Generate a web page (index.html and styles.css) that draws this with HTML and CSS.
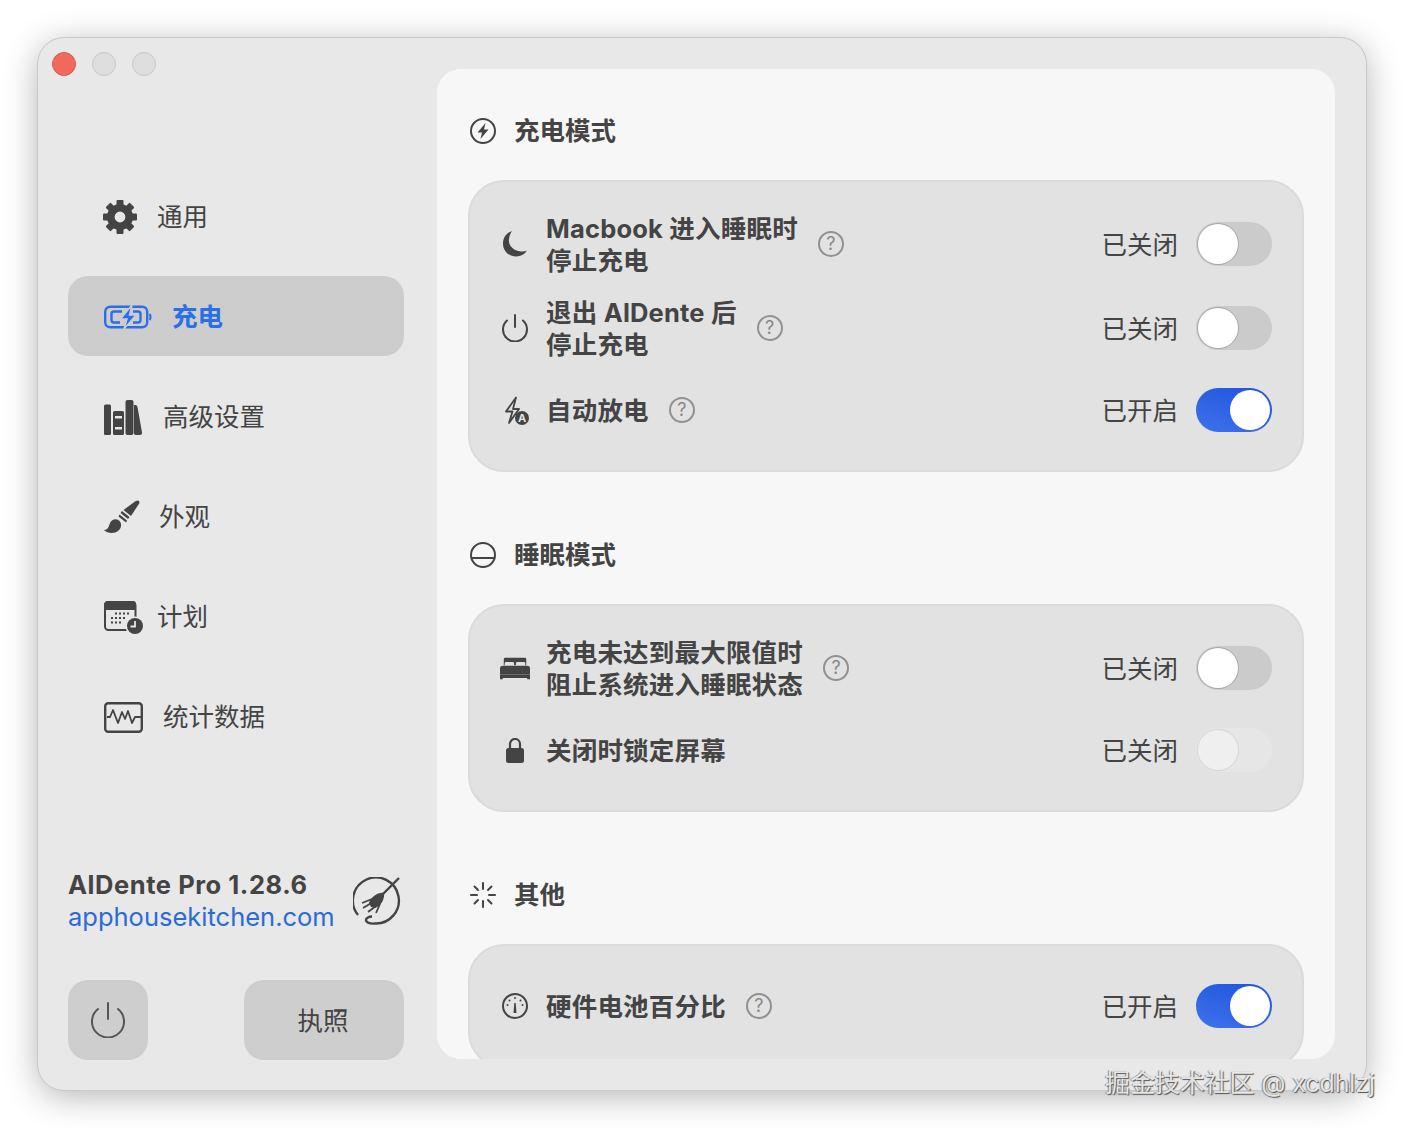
FILE: index.html
```html
<!DOCTYPE html>
<html lang="zh">
<head>
<meta charset="utf-8">
<title>AlDente</title>
<link rel="stylesheet" href="styles.css">
</head>
<body>
<div class="window">
  <aside class="sidebar">
    <div class="lights"><i class="light red"></i><i class="light"></i><i class="light"></i></div>
    <nav class="nav">
      <a class="nav-item">
        <svg width="34" height="34" viewBox="0 0 34 34" class="nudge"><circle cx="17" cy="17" r="9.2" fill="none" stroke="#444" stroke-width="7.6"/><g fill="#444"><rect x="13.5" y="0" width="7" height="6" rx="1"/><rect x="13.5" y="0" width="7" height="6" rx="1" transform="rotate(45 17 17)"/><rect x="13.5" y="0" width="7" height="6" rx="1" transform="rotate(90 17 17)"/><rect x="13.5" y="0" width="7" height="6" rx="1" transform="rotate(135 17 17)"/><rect x="13.5" y="0" width="7" height="6" rx="1" transform="rotate(180 17 17)"/><rect x="13.5" y="0" width="7" height="6" rx="1" transform="rotate(225 17 17)"/><rect x="13.5" y="0" width="7" height="6" rx="1" transform="rotate(270 17 17)"/><rect x="13.5" y="0" width="7" height="6" rx="1" transform="rotate(315 17 17)"/></g></svg>
        <span>通用</span>
      </a>
      <a class="nav-item active">
        <svg width="48" height="24" viewBox="0 0 48 24" fill="none" stroke="#2b6fe8" stroke-width="2.400"><rect x="1.200" y="1.700" width="42" height="20.600" rx="5"/><path d="M45.500 9c1.300 1 1.300 5 0 6" stroke-width="2.200"/><path d="M18 6.500H10a2.500 2.500 0 0 0-2.500 2.500v6a2.500 2.500 0 0 0 2.500 2.500h6M29 17.500h5a2.500 2.500 0 0 0 2.500-2.500V9A2.500 2.500 0 0 0 34 6.500h-5" stroke-width="2.400"/><path d="M28 0 16.500 14h6.500L20 24 32 10h-6.500z" fill="#2b6fe8" stroke="#cdcdcd" stroke-width="1.500"/></svg>
        <span>充电</span>
      </a>
      <a class="nav-item wide">
        <svg width="38" height="35" viewBox="0 0 38 35" fill="#444"><rect x="0" y="4.500" width="7" height="30.500" rx="1.500"/><path d="M10.500 11h8a1.500 1.500 0 0 1 1.500 1.500V33.500a1.500 1.500 0 0 1-1.500 1.500h-8A1.500 1.500 0 0 1 9 33.500V12.500A1.500 1.500 0 0 1 10.500 11zM11 16v2.500h7V16zM11 27v2.500h7V27z" fill-rule="evenodd"/><rect x="21.500" y="0" width="8" height="35" rx="2"/><path d="M30 5h1.500q1.500 0 2 2L38 32.500q.3 2.500-2 2.500h-4.500q-1.500 0-1.500-2z"/></svg>
        <span>高级设置</span>
      </a>
      <a class="nav-item narrow">
        <svg width="36" height="34" viewBox="0 0 36 34" fill="#444"><path d="M31 1.500q4.500-2.500 4.500 1.500L27 16l-7.500-6z"/><path d="M18 11l7.500 6-1.500 2-7.500-6zM15.500 14.500 23 20.500l-1 2-7.500-6z"/><path d="M0 30c4 0 4.500-3 6-7 1.500-3.500 6-5 9-2.500 3 2.500 3 7.500-1 10.500-3.500 3-11 2.500-14-1z"/></svg>
        <span>外观</span>
      </a>
      <a class="nav-item tight">
        <svg width="39" height="33" viewBox="0 0 39 33" fill="none"><rect x="1" y="1" width="30.500" height="28" rx="3.500" stroke="#444" stroke-width="2"/><path d="M4 0h25a3 3 0 0 1 3 3v6H0V4a4 4 0 0 1 4-4z" fill="#444"/><g fill="#444"><rect x="11" y="11.500" width="2" height="2"/><rect x="15" y="11.500" width="2" height="2"/><rect x="19" y="11.500" width="2" height="2"/><rect x="23" y="11.500" width="2" height="2"/><rect x="7" y="16" width="2" height="2"/><rect x="11" y="16" width="2" height="2"/><rect x="15" y="16" width="2" height="2"/><rect x="19" y="16" width="2" height="2"/><rect x="7" y="20.500" width="2" height="2"/><rect x="11" y="20.500" width="2" height="2"/><rect x="15" y="20.500" width="2" height="2"/></g><circle cx="31" cy="25" r="9.500" fill="#e8e8e8"/><circle cx="31" cy="25" r="8" fill="#444"/><path d="M31 20v5.500h-4.500" stroke="#e8e8e8" stroke-width="1.800"/></svg>
        <span>计划</span>
      </a>
      <a class="nav-item">
        <svg width="39" height="31" viewBox="0 0 39 31" fill="none" stroke="#444"><rect x="1.200" y="1.200" width="36.600" height="28.600" rx="3" stroke-width="2.400"/><path d="M3 15h3l3-7 5 13 4-11 3 7 3-8 4 12 3-6h6" stroke-width="1.800" stroke-linejoin="round"/></svg>
        <span>统计数据</span>
      </a>
    </nav>
    <div class="brand">
      <div class="brand-text">
        <strong>AlDente Pro 1.28.6</strong>
        <a class="link">apphousekitchen.com</a>
      </div>
      <svg width="48" height="48" viewBox="0 0 48 48" fill="none" stroke="#444"><path d="M5 38A23 23 0 1 1 22 46.500c-5 .5-9-1-9-3.500 0-2 3-3.500 6-3.500" stroke-width="2.400"/><path d="M46 1 28 19" stroke-width="2.400"/><path d="M31 16c1 6-3 13-9 15l-4-1-2-4c2-6 9-11 15-10z" fill="#444" stroke="none"/><path d="M19 22 9 26M20 25 10 31M23 29l-8 6M27 27l-4 9" stroke-width="1.800"/></svg>
    </div>
    <div class="actions">
      <button class="btn btn-power"><svg width="34" height="36" viewBox="0 0 34 36" fill="none" stroke="#555" stroke-width="2" stroke-linecap="round"><path d="M7 7A16 16 0 1 0 27 7"/><path d="M17 1v16"/></svg></button>
      <button class="btn btn-license"><span class="btn-text">执照</span></button>
    </div>
  </aside>

  <main class="panel">
    <section class="section">
      <h2 class="section-head">
        <svg width="26" height="26" viewBox="0 0 26 26" fill="none"><circle cx="13" cy="13" r="12" stroke="#444" stroke-width="2"/><path d="M15.500 5 7.500 14.500H12L10.500 21l8-9.500H14z" fill="#444"/></svg>
        <span>充电模式</span>
      </h2>
      <div class="card">
        <div class="row">
          <span class="row-icon"><svg width="24" height="26" viewBox="0 0 24 26" fill="#444"><path d="M9 0C3 2 0 7 0 13c0 7 6 12.500 13 12.500 5 0 9-2.500 11-6-2 1-4 1.300-6 1C10 20 5 14 6 8c.3-3 1.500-6 3-8z"/></svg></span>
          <span class="row-label">Macbook 进入睡眠时<br>停止充电</span>
          <span class="help">?</span>
          <span class="status">已关闭</span>
          <span class="toggle"></span>
        </div>
        <div class="row">
          <span class="row-icon"><svg width="26" height="28" viewBox="0 0 26 28" fill="none" stroke="#444" stroke-width="2" stroke-linecap="round"><path d="M5 6.500A12 12 0 1 0 21 6.500"/><path d="M13 1v12"/></svg></span>
          <span class="row-label">退出 AlDente 后<br>停止充电</span>
          <span class="help">?</span>
          <span class="status">已关闭</span>
          <span class="toggle"></span>
        </div>
        <div class="row">
          <span class="row-icon"><svg width="24" height="29" viewBox="0 0 24 29" fill="none" class="shift"><path d="M11 1.500 1 15.500h6.500L4 27l10-14H8z" stroke="#444" stroke-width="1.800" stroke-linejoin="round"/><circle cx="17" cy="22" r="7" fill="#444"/><text x="17" y="26" text-anchor="middle" class="badge-a">A</text></svg></span>
          <span class="row-label">自动放电</span>
          <span class="help">?</span>
          <span class="status">已开启</span>
          <span class="toggle on"></span>
        </div>
      </div>
    </section>

    <section class="section">
      <h2 class="section-head">
        <svg width="26" height="26" viewBox="0 0 26 26" fill="none" stroke="#444" stroke-width="2"><circle cx="13" cy="13" r="12"/><path d="M1 16h24"/></svg>
        <span>睡眠模式</span>
      </h2>
      <div class="card">
        <div class="row">
          <span class="row-icon"><svg width="32" height="23" viewBox="0 0 32 23" fill="#444"><path d="M4 1.500A1.500 1.500 0 0 1 5.500 0h21A1.500 1.500 0 0 1 28 1.500V8h-1V6q0-1.500-1.500-1.500h-7Q17 4.500 17 6v2h-2V6q0-1.500-1.500-1.500h-7Q5 4.500 5 6v2H4z"/><path d="M3 8.500h26q3 0 3 3V18H0v-6.500q0-3 3-3z"/><path d="M0 18h32v5h-3v-1.500H3V23H0z"/></svg></span>
          <span class="row-label">充电未达到最大限值时<br>阻止系统进入睡眠状态</span>
          <span class="help">?</span>
          <span class="status">已关闭</span>
          <span class="toggle"></span>
        </div>
        <div class="row">
          <span class="row-icon"><svg width="18" height="25" viewBox="0 0 18 25" fill="none"><path d="M4 11V6a5 5 0 0 1 10 0v5" stroke="#444" stroke-width="2.200"/><rect x="0" y="10" width="18" height="15" rx="2.500" fill="#444"/></svg></span>
          <span class="row-label">关闭时锁定屏幕</span>
          <span class="status">已关闭</span>
          <span class="toggle disabled"></span>
        </div>
      </div>
    </section>

    <section class="section">
      <h2 class="section-head">
        <svg width="26" height="26" viewBox="0 0 26 26" fill="none" stroke="#444" stroke-width="2" stroke-linecap="round"><path d="M13 1v6M13 19v6M1 13h6M19 13h6M4.500 4.500l3.500 3.500M21.500 4.500 18 8M4.500 21.500 8 18M21.500 21.500 18 18"/></svg>
        <span>其他</span>
      </h2>
      <div class="card">
        <div class="row">
          <span class="row-icon"><svg width="26" height="26" viewBox="0 0 26 26" fill="none"><circle cx="13" cy="13" r="12" stroke="#444" stroke-width="2"/><path d="M11.500 20 12.300 10h1.400l.8 10z" fill="#444"/><g fill="#444"><circle cx="5.500" cy="12" r="1"/><circle cx="7.500" cy="7.500" r="1"/><circle cx="13" cy="5" r="1"/><circle cx="18.500" cy="7.500" r="1"/><circle cx="20.500" cy="12" r="1"/></g></svg></span>
          <span class="row-label">硬件电池百分比</span>
          <span class="help">?</span>
          <span class="status">已开启</span>
          <span class="toggle on"></span>
        </div>
      </div>
    </section>
  </main>
</div>
<div class="watermark">掘金技术社区 @ xcdhlzj</div>
</body>
</html>
```

FILE: styles.css
```css
* { box-sizing: border-box; }

html, body { margin: 0; padding: 0; }

body {
  width: 1404px;
  height: 1128px;
  position: relative;
  overflow: hidden;
  background: #fff;
  color: #444;
  font-family: Inter, "Noto Sans CJK SC", sans-serif;
  font-size: 25.5px;
  line-height: 32px;
  padding: 38px;
}

.window {
  width: 1328px;
  height: 1052px;
  display: flex;
  background: #e8e8e8;
  border-radius: 26px;
  box-shadow: 0 0 0 1px #c9c9c9, 0 6px 34px rgba(0, 0, 0, .3);
}

.sidebar {
  width: 399px;
  flex: none;
  display: flex;
  flex-direction: column;
  padding: 14px 33px 30px 30px;
}

.lights { display: flex; gap: 16px; margin-left: -16px; }

.light {
  width: 24px;
  height: 24px;
  border-radius: 50%;
  background: #dedede;
  border: 1px solid #c8c8c8;
}

.light.red { background: #ee6a5f; border-color: #dd5a50; }

.nav {
  margin-top: 100px;
  display: flex;
  flex-direction: column;
  gap: 20px;
}

.nav-item {
  height: 80px;
  display: flex;
  align-items: center;
  gap: 20px;
  padding: 2px 0 0 36px;
  border-radius: 20px;
}

.nav-item svg { flex: none; }
.nav-item .nudge { margin-left: -1px; }
.nav-item.wide { gap: 21px; }
.nav-item.narrow { gap: 19px; }
.nav-item.tight { gap: 14px; }
.nav-item.active { background: #cdcdcd; color: #2b6fe8; font-weight: 700; }

.brand {
  margin-top: auto;
  margin-bottom: 47px;
  display: flex;
  align-items: center;
  justify-content: space-between;
  padding-right: 3px;
}

.brand-text { display: flex; flex-direction: column; }
.brand-text strong { font-weight: 700; letter-spacing: .55px; }
.link { color: #2b6bd6; }

.actions { display: flex; justify-content: space-between; }

.btn {
  height: 80px;
  border: 0;
  border-radius: 20px;
  background: #cecece;
  color: #444;
  font: inherit;
  padding: 0;
  display: flex;
  align-items: center;
  justify-content: center;
}

.btn-power { width: 80px; }
.btn-license { width: 160px; }
.btn-text { padding: 2px 2px 0 0; }

.panel {
  width: 898px;
  height: 990px;
  margin-top: 31px;
  flex: none;
  padding: 37px 31px 0;
  background: #f7f7f7;
  border-radius: 24px;
  overflow: hidden;
  display: flex;
  flex-direction: column;
  gap: 58px;
}

.section { flex: none; }

.section-head {
  margin: 0 0 24px;
  height: 50px;
  display: flex;
  align-items: center;
  gap: 18px;
  padding-left: 2px;
  font: inherit;
  font-weight: 700;
}

.card {
  background: #e2e2e2;
  border: 2px solid #dbdbdb;
  border-radius: 36px;
  padding: 30px;
  display: flex;
  flex-direction: column;
  gap: 20px;
}

.row {
  min-height: 60px;
  display: flex;
  align-items: center;
  gap: 20px;
}

.row-icon {
  width: 30px;
  margin-right: -4px;
  flex: none;
  display: flex;
  justify-content: center;
}

.row-icon .shift { margin-left: 4px; }

.row-label {
  font-weight: 700;
  letter-spacing: .2px;
  padding-top: 1px;
  margin-bottom: -1px;
}

.badge-a {
  fill: #e2e2e2;
  font: 700 11px Inter, sans-serif;
}

.help {
  width: 26px;
  height: 26px;
  flex: none;
  border: 2px solid #919191;
  border-radius: 50%;
  color: #888;
  font-size: 18px;
  line-height: 22px;
  text-align: center;
}

.status {
  margin-left: auto;
  margin-right: -2px;
  padding-top: 1px;
  margin-bottom: -1px;
}

.toggle {
  width: 76px;
  height: 44px;
  flex: none;
  border-radius: 22px;
  background: #cbcbcb;
  display: flex;
  align-items: center;
  padding: 2px;
}

.toggle::after {
  content: "";
  width: 40px;
  height: 40px;
  border-radius: 50%;
  background: #fff;
  box-shadow: 0 0 0 1px #a8a8a8;
}

.toggle.on {
  background: linear-gradient(200deg, #1f53dc, #3e72ec);
  justify-content: flex-end;
}

.toggle.on::after { box-shadow: none; }
.toggle.disabled { background: #e6e6e6; }
.toggle.disabled::after { background: #efefef; box-shadow: 0 0 0 1px #d6d6d6; }

.watermark {
  position: absolute;
  left: 1105px;
  top: 1067px;
  white-space: nowrap;
  font-family: Inter, "Noto Sans CJK SC", sans-serif;
  font-size: 25px;
  letter-spacing: -.1px;
  color: rgba(255, 255, 255, .82);
  text-shadow: 1px 1px 1px #555, -1px 0 1px #888;
}
```
